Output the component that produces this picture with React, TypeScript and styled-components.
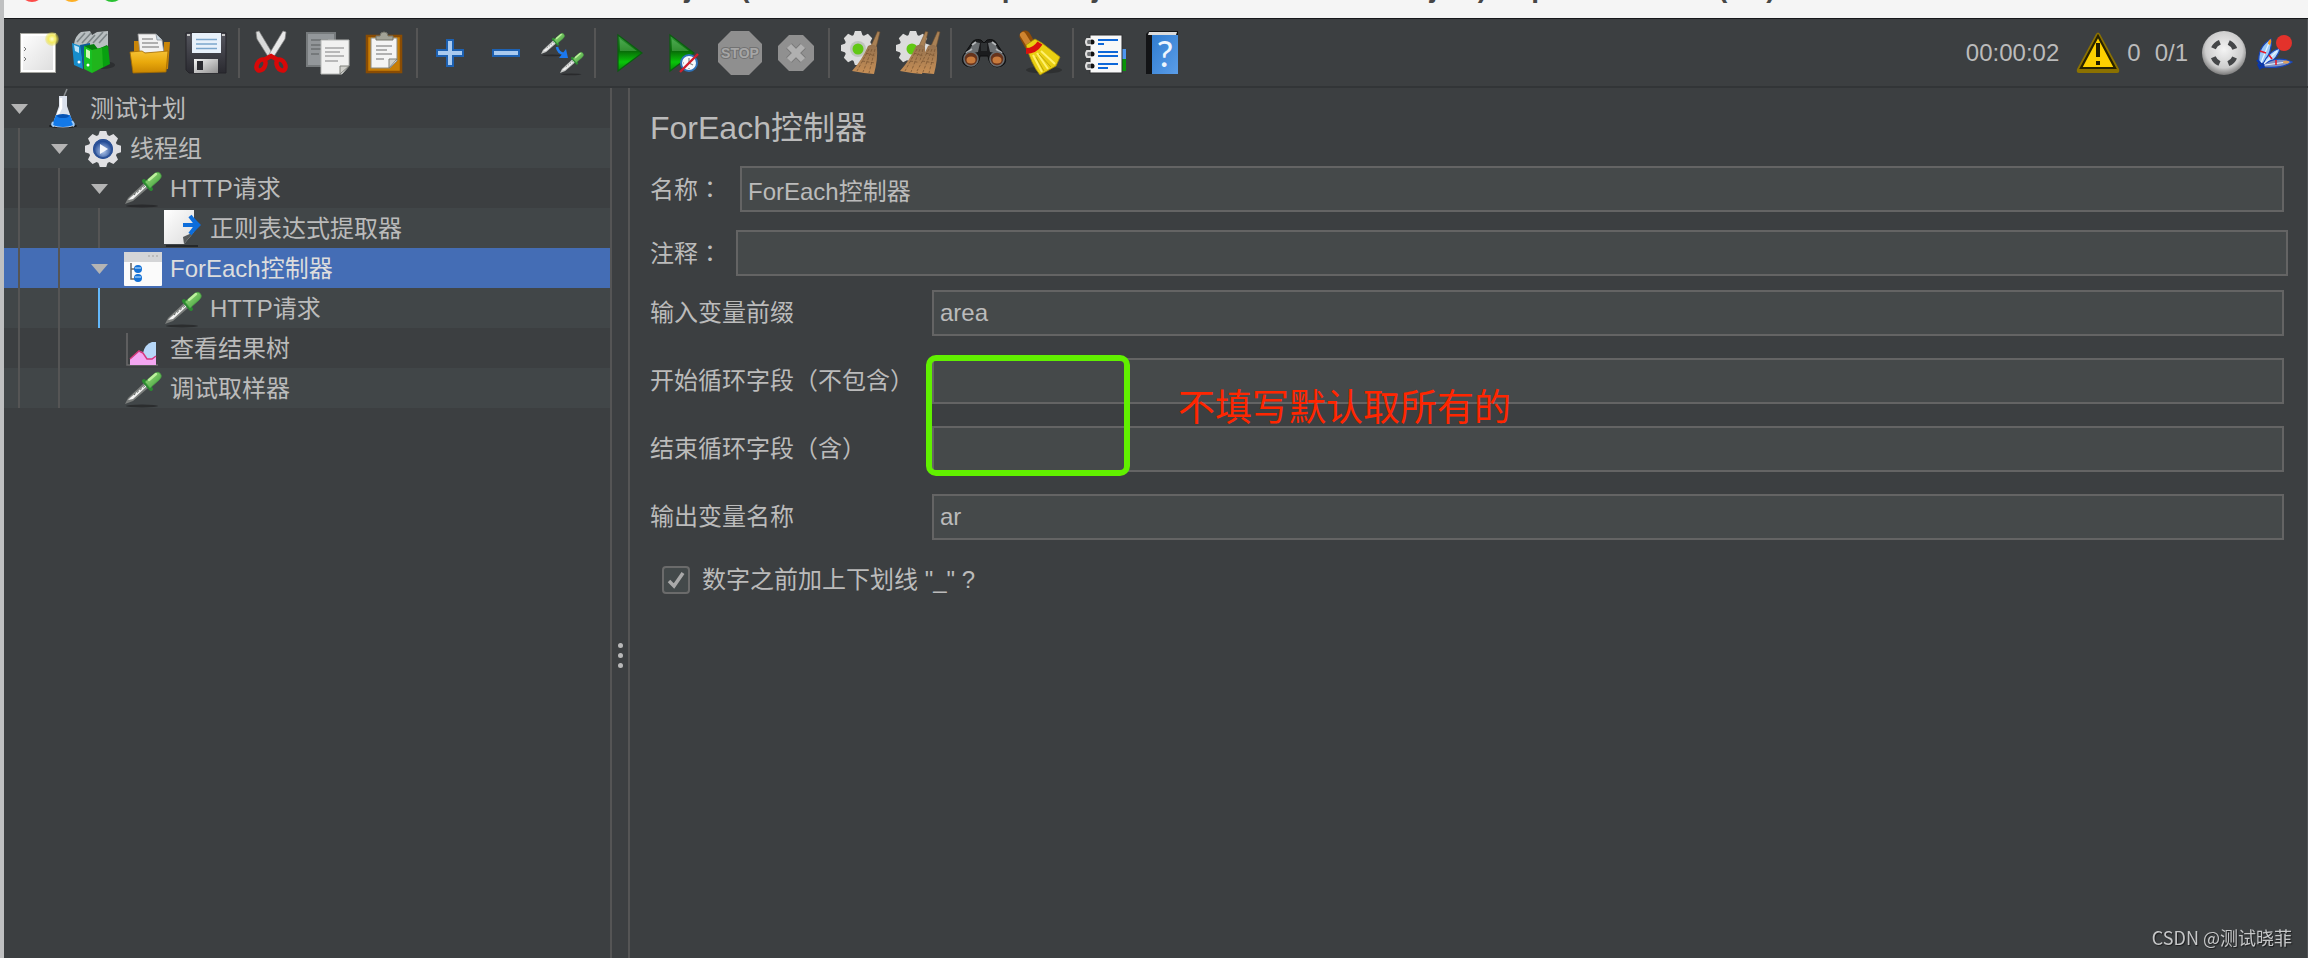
import React, { useState } from "react";
import styled, { createGlobalStyle } from "styled-components";

const color = {
  panel: "#3c3f41",
  stripe: "#414648",
  field: "#45494a",
  line: "#646464",
  divider: "#555555",
  text: "#bbbbbb",
  selected: "#446db5",
};

const GlobalStyle = createGlobalStyle`
  * { box-sizing: border-box; }
  body {
    margin: 0;
    background: ${color.panel};
    color: ${color.text};
    font-family: "Liberation Sans", "Noto Sans CJK SC", sans-serif;
    font-size: 24px;
    line-height: 40px;
  }
  button, input { font: inherit; color: inherit; }
  svg { display: block; overflow: visible; }
`;

/* ---------- window ---------- */

const Window = styled.div`
  display: flex;
  flex-direction: column;
  min-height: 100vh;
  border-left: 4px solid #bfc0c1;
  box-shadow: inset -1px 0 #505356;
`;

const TitleBar = styled.header`
  display: flex;
  align-items: flex-end;
  height: 19px;
  overflow: hidden;
  background: #f5f5f5;
  border-bottom: 1px solid #17181b;
`;

const TitleBarInner = styled.div`
  display: grid;
  grid-template-columns: 160px 1fr 160px;
  align-items: center;
  flex: 1;
  height: 56px;
`;

const Lights = styled.div`
  display: flex;
  gap: 16px;
  padding-left: 16px;
`;

const Light = styled.button<{ $fill: string }>`
  width: 24px;
  height: 24px;
  padding: 0;
  border: 0;
  border-radius: 50%;
  background: ${(p) => p.$fill};
`;

const WindowTitle = styled.h1`
  margin: 0;
  padding-bottom: 4px;
  color: #464646;
  font-size: 28px;
  line-height: 32px;
  text-align: center;
  white-space: nowrap;
`;

/* ---------- tool bar ---------- */

const Toolbar = styled.nav`
  display: flex;
  align-items: center;
  padding: 9px 16px 8px 6px;
  border-bottom: 2px solid #323537;
`;

const ToolButton = styled.button`
  flex: none;
  display: flex;
  align-items: center;
  justify-content: center;
  width: 56px;
  height: 50px;
  padding: 0;
  border: 0;
  background: transparent;
`;

const Separator = styled.span`
  flex: none;
  width: 2px;
  height: 50px;
  margin: 0 4px;
  background: ${color.divider};
`;

const Status = styled.div`
  display: flex;
  align-items: center;
  margin-left: auto;
  white-space: nowrap;
`;

const Elapsed = styled.time`
  margin-right: 10px;
`;

const Count = styled.span`
  margin-right: 14px;
`;

const WarningButton = styled(ToolButton)`
  width: 58px;
`;

const GaugeIcon = styled.span`
  display: flex;
  gap: 10px;
`;

/* ---------- tree ---------- */

const Main = styled.main`
  flex: 1;
  display: grid;
  grid-template-columns: 608px 18px minmax(0, 1fr);
`;

const Tree = styled.ul`
  margin: 0;
  padding: 0;
  list-style: none;
  border-right: 2px solid ${color.divider};
`;

const TreeRow = styled.li<{ $selected?: boolean }>`
  display: flex;
  height: 40px;
  line-height: 42px;
  white-space: nowrap;
  background: ${color.panel};
  &:nth-child(even) { background: ${color.stripe}; }
  && {
    ${(p) => p.$selected && `background: ${color.selected}; color: #dddddd;`}
  }
`;

const Guide = styled.span<{ $active?: boolean }>`
  width: 26px;
  margin-left: 14px;
  border-left: 2px solid ${(p) => (p.$active ? "#63b8fb" : color.divider)};
`;

const Toggle = styled.button`
  display: flex;
  align-items: center;
  width: 40px;
  padding: 2px 0 0 7px;
  border: 0;
  background: transparent;
`;

const NoToggle = styled.span`
  width: 40px;
`;

const NodeIcon = styled.span`
  width: 40px;
  margin-right: 6px;
`;

const Splitter = styled.div`
  display: flex;
  flex-direction: column;
  align-items: center;
  gap: 5px;
  padding-top: 555px;
  border-right: 2px solid ${color.divider};
`;

const Dot = styled.span`
  width: 5px;
  height: 5px;
  border-radius: 50%;
  background: #b8b8b8;
`;

/* ---------- form ---------- */

const Panel = styled.section`
  display: flex;
  flex-direction: column;
  padding: 16px 20px 0;
`;

const Heading = styled.h2`
  margin: 0 0 14px;
  font-size: 32px;
  font-weight: 400;
  line-height: 48px;
`;

const FieldRow = styled.div<{ $label: number; $gap: number; $wide?: boolean }>`
  display: grid;
  grid-template-columns: ${(p) => p.$label}px minmax(0, 1fr);
  align-items: center;
  margin-bottom: ${(p) => p.$gap}px;
  padding-right: ${(p) => (p.$wide ? 0 : 4)}px;
  line-height: 42px;
  white-space: nowrap;
`;

const CenteredMark = styled.span`
  font-family: "Noto Sans CJK TC", sans-serif;
`;

const Input = styled.input`
  width: 100%;
  height: 46px;
  padding: 0 6px;
  border: 2px solid ${color.line};
  border-radius: 0;
  outline: 0;
  background: ${color.field};
  line-height: 28px;
`;

const Range = styled.div`
  position: relative;
`;

const Highlight = styled.div`
  position: absolute;
  left: 276px;
  top: -3px;
  width: 204px;
  height: 121px;
  border: 6px solid #61f000;
  border-radius: 10px;
  pointer-events: none;
`;

const Remark = styled.p`
  position: absolute;
  left: 528px;
  top: 24px;
  margin: 0;
  color: #ff2600;
  font-size: 37px;
  line-height: 54px;
  white-space: nowrap;
`;

const CheckRow = styled.label`
  display: flex;
  align-items: center;
  gap: 12px;
  margin-top: -2px;
  padding-left: 12px;
`;

const Check = styled.input`
  appearance: none;
  width: 28px;
  height: 28px;
  margin: 0;
  border: 2px solid #6b6b6b;
  border-radius: 4px;
  background: #43494a;
`;

const CheckBox = styled.span`
  display: grid;
  > * { grid-area: 1 / 1; }
  svg { pointer-events: none; }
`;

const Watermark = styled.footer`
  position: fixed;
  right: 16px;
  bottom: 7px;
  color: #c6c7c8;
  font-family: "Noto Sans CJK SC", sans-serif;
  font-size: 18px;
  line-height: 28px;
  text-shadow: 1px 1px 1px #1c1d1e;
`;

/* ---------- icons ---------- */

const Icon = ({ size = 44, children }: { size?: number; children: React.ReactNode }) => (
  <svg width={size} height={size} viewBox={`0 0 ${size} ${size}`} aria-hidden="true">
    {children}
  </svg>
);

const GradientSheet = styled.svg`
  position: absolute;
`;

const Gradients = () => (
  <GradientSheet width="0" height="0" aria-hidden="true">
    <defs>
      <linearGradient id="paper" x1="0" y1="0" x2="1" y2="1">
        <stop offset="0" stopColor="#fff" />
        <stop offset="1" stopColor="#dcdcdc" />
      </linearGradient>
      <linearGradient id="folder" x1="0" y1="0" x2="0" y2="1">
        <stop offset="0" stopColor="#f6c235" />
        <stop offset="0.5" stopColor="#e9a90c" />
        <stop offset="1" stopColor="#c98500" />
      </linearGradient>
      <linearGradient id="green" x1="0" y1="0" x2="0" y2="1">
        <stop offset="0" stopColor="#3ca043" />
        <stop offset="0.45" stopColor="#086c08" />
        <stop offset="0.75" stopColor="#09c409" />
        <stop offset="1" stopColor="#078607" />
      </linearGradient>
      <linearGradient id="metal" x1="0" y1="0" x2="1" y2="1">
        <stop offset="0" stopColor="#f4f4f4" />
        <stop offset="1" stopColor="#8f8f8f" />
      </linearGradient>
      <linearGradient id="floppy" x1="0" y1="0" x2="0" y2="1">
        <stop offset="0" stopColor="#55565e" />
        <stop offset="1" stopColor="#2a2a30" />
      </linearGradient>
      <linearGradient id="bulb" x1="0" y1="0" x2="1" y2="1">
        <stop offset="0" stopColor="#a4e383" />
        <stop offset="1" stopColor="#3b9c38" />
      </linearGradient>
      <linearGradient id="book" x1="0" y1="0" x2="1" y2="1">
        <stop offset="0" stopColor="#2f7cd0" />
        <stop offset="1" stopColor="#5b9de8" />
      </linearGradient>
      <linearGradient id="straw" x1="0" y1="0" x2="0" y2="1">
        <stop offset="0" stopColor="#94714e" />
        <stop offset="1" stopColor="#c78f56" />
      </linearGradient>
      <radialGradient id="ball" cx="0.5" cy="0.42" r="0.6">
        <stop offset="0" stopColor="#f4f4f4" />
        <stop offset="0.7" stopColor="#cdcdcd" />
        <stop offset="1" stopColor="#6e6e6e" />
      </radialGradient>
      <radialGradient id="glow">
        <stop offset="0" stopColor="#ffffd0" />
        <stop offset="0.5" stopColor="#f4ec62" />
        <stop offset="1" stopColor="#e6dc3a" stopOpacity="0.25" />
      </radialGradient>
      <radialGradient id="hub" cx="0.5" cy="0.6">
        <stop offset="0" stopColor="#b8cdf0" />
        <stop offset="1" stopColor="#1c4591" />
      </radialGradient>
    </defs>
  </GradientSheet>
);

/* A dropper lying from its tip at 0,0 to its bulb at about 34,-31. */
const Dropper = ({ x, y, scale = 1, tube = "#7b7e7c" }: { x: number; y: number; scale?: number; tube?: string }) => (
  <g transform={`translate(${x} ${y}) scale(${scale})`}>
    <ellipse cx="17" cy="2" rx="16" ry="1.4" fill="#1c1d1e" opacity="0.6" />
    <path d="M0 0L3-6L19-21L23-16L8-3Z" fill={tube} />
    <path d="M3-4L6-7L20-19L21.500-17.500L8-5Z" fill="#f4f4f4" />
    <path d="M9-9L20-18" stroke="#5d6660" strokeWidth="1" strokeDasharray="2 2" />
    <path d="M19-23L26-15" stroke="#2b8a31" strokeWidth="4" strokeLinecap="round" />
    <path d="M20-22L29-30Q34-34 36-29Q37-27 34-24L25-16Z" fill="url(#bulb)" stroke="#4aa445" strokeWidth="0.8" />
    <path d="M24-24L31-30" stroke="#bdf09d" strokeWidth="2.4" strokeLinecap="round" />
  </g>
);

const gearTeeth = [0, 45, 90, 135, 180, 225, 270, 315];

const Gear = ({ x, y, r, fill }: { x: number; y: number; r: number; fill: string }) => (
  <g transform={`translate(${x} ${y})`} fill={fill}>
    <circle r={r * 0.8} />
    {gearTeeth.map((a) => (
      <path key={a} transform={`rotate(${a})`} d={`M${-r * 0.28} ${-r * 0.7}L${-r * 0.18} ${-r}H${r * 0.18}L${r * 0.28} ${-r * 0.7}Z`} />
    ))}
  </g>
);

const Broom = ({ x }: { x: number }) => (
  <g transform={`translate(${x} 0)`}>
    <path d="M37.500.5L40 1L36 17L31 15Z" fill="#a98155" stroke="#6d4f31" strokeWidth="0.6" />
    <path d="M28 15Q33 12 37 16Q38 28 34 43L24 42L12 40Q22 29 28 15Z" fill="url(#straw)" />
    <path d="M29 18L17 40M32 18L23 41M35 18L29 42M26 22L35 25M22 30L35 32" stroke="#7c5835" strokeWidth="0.8" strokeDasharray="3 1.5" />
  </g>
);

const ToolIcon = ({ name }: { name: string }) => {
  switch (name) {
    case "new":
      return (
        <Icon>
          <rect x="4.500" y="2.500" width="35" height="39" fill="url(#paper)" stroke="#a5a5a0" />
          <rect x="6" y="4" width="32" height="36" fill="none" stroke="#fff" strokeWidth="2" />
          <path d="M8 16l2 2-2 2M8 26l2 2-2 2" stroke="#777" fill="none" />
          <circle cx="36" cy="8" r="7" fill="url(#glow)" />
        </Icon>
      );
    case "templates":
      return (
        <Icon>
          <ellipse cx="30" cy="34" rx="13" ry="4" fill="#232526" opacity="0.6" />
          <path d="M2 13Q3 5 9 1L18 0L20 4L25 1L36 0V16L24 20L6 18Z" fill="#b9bfc1" />
          <path d="M5 11l8-9M10 12l9-10M15 13l8-9M21 12l10-11M27 12l8-9" stroke="#7d8587" strokeWidth="1.6" />
          <path d="M0 12L9 15L11 38L2 34Z" fill="#168dcc" />
          <path d="M2 14L7 16L7 22L3 20Z" fill="#b9e2f8" />
          <path d="M8 14L18 12L18 16L12 18V38Z" fill="#0a5c98" />
          <path d="M12 15L22 13L26 18L35 14L37 17L20 20Z" fill="#067f0d" />
          <path d="M12 15L20 19V42L12 38Z" fill="#17c022" />
          <path d="M14 18L18 20V28L14 26Z" fill="#cdf8b8" />
          <path d="M20 19L36 15L38 33L20 42Z" fill="#08a010" />
          <path d="M20 19L30 17L31 36L20 42Z" fill="#20b51c" />
          <circle cx="7" cy="31" r="1.500" fill="#fff" />
          <circle cx="16" cy="34" r="1.500" fill="#fff" />
        </Icon>
      );
    case "open":
      return (
        <Icon>
          <path d="M6 10H14V20H36V11H42L40 38L6 40Z" fill="#c98508" />
          <path d="M10 3H28L34 9L36 22H12Z" fill="#f1f1f1" stroke="#9c9c9c" strokeWidth="0.8" />
          <path d="M28 3L29 9H34" fill="#c7d5df" stroke="#8a9299" strokeWidth="0.8" />
          <path d="M14 8H25M14 12H30M14 16H31" stroke="#999" strokeWidth="1.5" />
          <path d="M2 21L14 20L17 22L40 20L38 41L5 42Z" fill="url(#folder)" stroke="#a56c00" strokeWidth="0.8" />
        </Icon>
      );
    case "save":
      return (
        <Icon>
          <path d="M2 2H42V42H5L2 39Z" fill="url(#floppy)" stroke="#25252a" />
          <rect x="8" y="2" width="29" height="20" fill="#e8f1fa" />
          <path d="M12 8.500H33M12 13H33M12 17.500H33" stroke="#7ba6cc" strokeWidth="1.400" />
          <rect x="10" y="28" width="24" height="14" fill="url(#metal)" />
          <rect x="13" y="30" width="6" height="9" fill="#2b2b30" />
          <path d="M3 4h3M38 4h3" stroke="#c6c6c6" strokeWidth="2" />
        </Icon>
      );
    case "cut":
      return (
        <Icon>
          <path d="M6 1L9 0L24 25L19 27L7 8Z" fill="#d9dada" stroke="#858585" strokeWidth="0.7" />
          <path d="M36 1L33 0L18 25L23 27L35 8Z" fill="#e8e8e8" stroke="#858585" strokeWidth="0.7" />
          <g fill="none" stroke="#d80808" strokeWidth="4.500">
            <ellipse cx="11" cy="34" rx="4" ry="6" transform="rotate(30 11 34)" />
            <ellipse cx="31" cy="34" rx="4" ry="6" transform="rotate(-30 31 34)" />
            <path d="M14 29L21 25L28 29" />
          </g>
        </Icon>
      );
    case "copy":
      return (
        <Icon>
          <rect x="1" y="2" width="28" height="33" fill="#93979a" stroke="#767a7c" strokeWidth="2" />
          <path d="M5 9H22M5 14H15M5 18H15M5 23H13" stroke="#6c7072" strokeWidth="1.500" />
          <path d="M15 9H43V35L36 43H15Z" fill="#f1f1f0" stroke="#b5b7b5" />
          <path d="M19 17H38M19 21H34M19 25H38M19 30H32" stroke="#a5a5a5" strokeWidth="1.500" />
          <path d="M43 35H34V43Z" fill="#cfcfca" stroke="#7e807a" />
        </Icon>
      );
    case "paste":
      return (
        <Icon>
          <rect x="5" y="5" width="34" height="36" fill="#c77d06" stroke="#8a4c03" strokeWidth="2.500" />
          <path d="M9 7H35V30L28 37H9Z" fill="#f4f4f4" stroke="#8c8c84" />
          <path d="M35 28H27V37Z" fill="#d0d0ca" stroke="#7e807a" />
          <path d="M14 15H30M14 19H25M14 23H30M14 28H22" stroke="#9b9b9b" strokeWidth="1.500" />
          <path d="M14 9V5H18Q18 1 22 1Q26 1 26 5H31V9Z" fill="#a3a397" stroke="#74746a" />
        </Icon>
      );
    case "plus":
      return (
        <Icon>
          <path d="M18 8H26V18H36V26H26V36H18V26H8V18H18Z" fill="#1d61b2" />
          <path d="M20 10H24V20H34V24H24V34H20V24H10V20H20Z" fill="#a9caef" />
        </Icon>
      );
    case "minus":
      return (
        <Icon>
          <rect x="8" y="18" width="28" height="8" fill="#1d61b2" />
          <rect x="10" y="20" width="24" height="4" fill="#a9caef" />
        </Icon>
      );
    case "toggle":
      return (
        <Icon>
          <Dropper x={1} y={23} scale={0.65} tube="#c4c6c5" />
          <Dropper x={20} y={42} scale={0.65} tube="#c4c6c5" />
          <path d="M17 16Q18 22 24 23" stroke="#1f7df0" strokeWidth="2.500" fill="none" />
          <path d="M26 18L28 27L19 27Z" fill="#1b78ef" />
        </Icon>
      );
    case "start":
      return (
        <Icon>
          <path d="M12 4L36 22L12 40Z" fill="url(#green)" stroke="#0a5d10" strokeWidth="1.200" />
          <path d="M14 8L31 20L14 20Z" fill="#7dd07f" opacity="0.35" />
        </Icon>
      );
    case "startNoTimers":
      return (
        <Icon>
          <path d="M8 4L32 22L8 40Z" fill="url(#green)" stroke="#0a5d10" strokeWidth="1.200" />
          <path d="M10 8L27 20L10 20Z" fill="#7dd07f" opacity="0.35" />
          <circle cx="27" cy="32" r="8" fill="#f7fafc" stroke="#2e72b8" strokeWidth="2" />
          <path d="M27 32V27M27 32L31 34M27 38v-1M21 32h1" stroke="#888" strokeWidth="1.200" />
          <path d="M18 41L36 23" stroke="#cf1f2d" strokeWidth="2.400" />
        </Icon>
      );
    case "stop":
      return (
        <Icon>
          <path d="M13 0H31L44 13V31L31 44H13L0 31V13Z" fill="#8f8f8f" />
          <text x="22" y="27" textAnchor="middle" fontSize="14" fontWeight="700" fill="#a6a6a6" stroke="#727272" strokeWidth="2" paintOrder="stroke">STOP</text>
        </Icon>
      );
    case "shutdown":
      return (
        <Icon>
          <path d="M15 4H29L40 15V29L29 40H15L4 29V15Z" fill="#909090" />
          <path d="M15 15L29 29M29 15L15 29" stroke="#7b7b7b" strokeWidth="8" />
          <path d="M15 15L29 29M29 15L15 29" stroke="#b0b0b0" strokeWidth="6" />
        </Icon>
      );
    case "clear":
      return (
        <Icon>
          <Gear x={18} y={17} r={17} fill="#dcdcdc" />
          <circle cx="18" cy="18" r="8" fill="#bfc4bd" />
          <circle cx="18" cy="18" r="5.500" fill="#62c814" />
          <Broom x={0} />
        </Icon>
      );
    case "clearAll":
      return (
        <Icon>
          <Gear x={17} y={17} r={17} fill="#dcdcdc" />
          <circle cx="16" cy="18" r="5.500" fill="#62c814" />
          <Broom x={-8} />
          <Broom x={4} />
        </Icon>
      );
    case "search":
      return (
        <Icon>
          <path d="M9 13Q12 7 19 9L22 12L25 9Q32 7 35 13L43 25Q46 35 35 36Q27 35 26 25H18Q17 35 9 36Q-2 35 1 25Z" fill="#1b1c1e" stroke="#0e0f10" />
          <path d="M9 16L13 11L18 12L16 21L6 23ZM35 16L31 11L26 12L28 21L38 23Z" fill="#6a6e71" />
          <path d="M19 12H25V20H19Z" fill="#2f3234" />
          <path d="M10 14l4-3M30 11l4 3M4 22l6-4M34 18l6 4" stroke="#b4b7b9" strokeWidth="1.800" />
          <circle cx="9" cy="28" r="7" fill="#66331c" stroke="#6a6d70" strokeWidth="1.500" />
          <circle cx="35" cy="28" r="7" fill="#66331c" stroke="#6a6d70" strokeWidth="1.500" />
          <ellipse cx="9" cy="29" rx="4.500" ry="3.500" fill="#c87a3c" />
          <ellipse cx="35" cy="29" rx="4.500" ry="3.500" fill="#c87a3c" />
        </Icon>
      );
    case "resetSearch":
      return (
        <Icon>
          <ellipse cx="26" cy="39" rx="18" ry="3.500" fill="#242627" opacity="0.6" />
          <path d="M7 5L12 14" stroke="#8b4b09" strokeWidth="11" strokeLinecap="round" />
          <path d="M5 4L10 12" stroke="#cf842f" strokeWidth="6" strokeLinecap="round" />
          <path d="M8 14L17 8L24 12L42 26L38 35L22 44Q13 33 8 14Z" fill="#e9cf12" stroke="#a58c05" strokeWidth="0.800" />
          <path d="M15 24L24 41M19 22L30 38M23 20L37 33" stroke="#fff06c" strokeWidth="2" />
          <path d="M18 26L26 40M21 23L33 36" stroke="#b39b08" strokeWidth="0.800" />
          <path d="M8 20Q17 20 22 12" stroke="#d9120d" strokeWidth="6" fill="none" />
        </Icon>
      );
    case "functions":
      return (
        <Icon>
          <path d="M37 18h5v10h-5z" fill="#4d97ef" />
          <path d="M37 28h5v12h-5z" fill="#079407" />
          <rect x="6" y="4" width="32" height="38" fill="#f8f8f8" stroke="#2f3132" />
          <g stroke="#0d67d8" strokeWidth="2.200">
            <path d="M14 9H34M14 13H20M14 21H34M14 25H34M14 33H34M14 37H24" />
          </g>
          {[11, 23, 35].map((y) => (
            <g key={y}>
              <circle cx="8" cy={y} r="2.500" fill="#111" />
              <path d={`M7 ${y - 3}H3Q1 ${y} 3 ${y + 3}H7`} fill="#6f7274" stroke="#dedede" strokeWidth="2" />
            </g>
          ))}
        </Icon>
      );
    case "help":
      return (
        <Icon>
          <path d="M6 3L9 0H38V43H6Z" fill="#131416" />
          <path d="M9 1H37L36 4H8Z" fill="#dcdcdc" />
          <rect x="12" y="4" width="26" height="39" fill="url(#book)" />
          <text x="25" y="36" textAnchor="middle" fontFamily="Lato, sans-serif" fontSize="37" fill="#eef5fd">?</text>
        </Icon>
      );
    case "warning":
      return (
        <Icon>
          <path d="M20 3Q22 0 24 3L43 38Q44 42 41 42H3Q0 42 1 38Z" fill="#8b7100" />
          <path d="M22 5L39 37H5Z" fill="#fdd000" stroke="#272200" strokeWidth="2.200" />
          <path d="M20 12H24V26H20ZM20 30H24V34H20Z" fill="#221e00" />
        </Icon>
      );
    default:
      return null;
  }
};

const BallIcon = () => (
  <Icon>
    <circle cx="22" cy="22" r="22" fill="url(#ball)" />
    <circle cx="22" cy="22" r="11.500" fill="none" stroke="#444648" strokeWidth="5" strokeDasharray="9 9.060" strokeDashoffset="-4.530" />
  </Icon>
);

const FeatherIcon = () => (
  <svg width="36" height="44" viewBox="0 0 36 44" aria-hidden="true">
    <g stroke="#1745b8" strokeWidth="1.200">
      <path d="M3 33Q1 16 15 8Q17 20 7 34Z" fill="#9ac8f7" />
      <path d="M7 33Q12 21 24 17Q23 26 10 35Z" fill="#b4d7fa" />
      <path d="M7 34Q20 24 36 31Q26 38 7 36Z" fill="#8193c4" />
      <path d="M5 32L13 12M8 33L21 20M9 34L31 31" fill="none" stroke="#e9f4ff" />
    </g>
    <path d="M12 13Q12 9 15 8Q16 11 14 14Z" fill="#f79a1c" />
    <ellipse cx="30" cy="31" rx="3" ry="1.500" fill="#dda05c" />
    <path d="M4 20L10 22M13 24L16 28M20 29L20 34" stroke="#e4192b" strokeWidth="1.600" />
    <path d="M1 29L7 35L4 37L2 33M6 32L8 37" fill="none" stroke="#0b37a7" strokeWidth="2.400" />
    <circle cx="28" cy="12" r="8" fill="#e3322b" />
  </svg>
);

const TreeIcon = ({ name }: { name: string }) => {
  switch (name) {
    case "plan":
      return (
        <Icon size={40}>
          <ellipse cx="19" cy="38" rx="14" ry="2" fill="#18191a" />
          <path d="M20 8L23 1" stroke="#8b8f92" strokeWidth="1.500" />
          <path d="M15 8H23V18L30 38Q19 41 8 38L15 18Z" fill="#dbe1ec" />
          <path d="M17 10V20L14 26" stroke="#fff" strokeWidth="2.500" fill="none" />
          <path d="M12 27H26L30 37Q19 41 8 37Z" fill="#1379e8" />
          <path d="M9 34Q7 38 10 38M28 33Q31 37 29 38" stroke="#9dcbfa" strokeWidth="2" fill="none" />
          <ellipse cx="19" cy="28" rx="6" ry="2" fill="#0652b4" />
        </Icon>
      );
    case "threads":
      return (
        <Icon size={40}>
          <Gear x={19} y={21} r={18} fill="#e0e0e3" />
          <circle cx="19" cy="21" r="10" fill="url(#hub)" />
          <circle cx="19" cy="21" r="9" fill="none" stroke="#2c5297" strokeWidth="2" />
          <path d="M16 16L24 21L16 26Z" fill="#f4f6fa" />
        </Icon>
      );
    case "sampler":
      return (
        <Icon size={40}>
          <Dropper x={1} y={36} />
        </Icon>
      );
    case "extractor":
      return (
        <Icon size={40}>
          <path d="M2 38H34" stroke="#25282a" strokeWidth="2" />
          <path d="M0 2H30V24L20 36H0Z" fill="url(#paper)" />
          <path d="M30 24L20 36L19 29Z" fill="#55595b" />
          <path d="M19 17H31M26 8L33 17L26 26" stroke="#0c6ddb" strokeWidth="4" fill="none" />
          <path d="M30 10L37 17L30 24Z" fill="#0c6ddb" />
        </Icon>
      );
    case "controller":
      return (
        <Icon size={40}>
          <rect x="0" y="4" width="38" height="34" rx="1" fill="#fbfbfb" />
          <rect x="0" y="4" width="38" height="10" fill="#d4d5d7" />
          <path d="M24 8h2M28 8h2M32 8h2" stroke="#bbb" strokeWidth="2" />
          <path d="M7 15V31H11M7 21H11" stroke="#666" strokeWidth="1.500" fill="none" />
          <circle cx="14" cy="21" r="4" fill="#1672d6" />
          <circle cx="14" cy="30" r="4" fill="#1672d6" />
          <path d="M11 20h6M11 29h6" stroke="#8fc3f6" strokeWidth="1.500" />
        </Icon>
      );
    case "results":
      return (
        <Icon size={40}>
          <path d="M3 5V37H34" stroke="#6a6a6a" strokeWidth="1.500" fill="none" />
          <path d="M19 25Q21 16 28 14H32V33H22Z" fill="#b7d7f8" />
          <path d="M6 37V31L15 23L19 24L23 31L32 29V37Z" fill="#f3a6f1" />
          <path d="M6 31L15 23L19 25L23 31L28 31L32 28" stroke="#d4387d" strokeWidth="1.500" fill="none" />
        </Icon>
      );
    default:
      return null;
  }
};

/* ---------- data ---------- */

const toolGroups: { icon: string; label: string; disabled?: boolean }[][] = [
  [
    { icon: "new", label: "新建" },
    { icon: "templates", label: "模板" },
    { icon: "open", label: "打开" },
    { icon: "save", label: "保存" },
  ],
  [
    { icon: "cut", label: "剪切" },
    { icon: "copy", label: "复制" },
    { icon: "paste", label: "粘贴" },
  ],
  [
    { icon: "plus", label: "展开" },
    { icon: "minus", label: "收起" },
    { icon: "toggle", label: "切换" },
  ],
  [
    { icon: "start", label: "启动" },
    { icon: "startNoTimers", label: "不停顿开始" },
    { icon: "stop", label: "停止", disabled: true },
    { icon: "shutdown", label: "关闭", disabled: true },
  ],
  [
    { icon: "clear", label: "清除" },
    { icon: "clearAll", label: "清除全部" },
  ],
  [
    { icon: "search", label: "查找" },
    { icon: "resetSearch", label: "重置搜索" },
  ],
  [
    { icon: "functions", label: "函数助手" },
    { icon: "help", label: "帮助" },
  ],
];

const nodes: { text: string; icon: string; level: number; open?: boolean; active?: boolean; selected?: boolean }[] = [
  { text: "测试计划", icon: "plan", level: 0, open: true },
  { text: "线程组", icon: "threads", level: 1, open: true },
  { text: "HTTP请求", icon: "sampler", level: 2, open: true },
  { text: "正则表达式提取器", icon: "extractor", level: 3 },
  { text: "ForEach控制器", icon: "controller", level: 2, open: true, selected: true },
  { text: "HTTP请求", icon: "sampler", level: 3, active: true },
  { text: "查看结果树", icon: "results", level: 2 },
  { text: "调试取样器", icon: "sampler", level: 2 },
];

export default function App() {
  const [underscore, setUnderscore] = useState(true);
  return (
    <Window>
      <GlobalStyle />
      <Gradients />
      <TitleBar>
        <TitleBarInner>
          <Lights>
            <Light $fill="#fc4b48" aria-label="关闭窗口" />
            <Light $fill="#fdaf24" aria-label="最小化" />
            <Light $fill="#28c131" aria-label="缩放" />
          </Lights>
          <WindowTitle>循环控制器.jmx (/Users/xiaofei001/apache-jmeter-5.4/bin/循环控制器.jmx) - Apache JMeter (5.4)</WindowTitle>
        </TitleBarInner>
      </TitleBar>

      <Toolbar>
        {toolGroups.map((group, i) => (
          <React.Fragment key={i}>
            {i > 0 && <Separator />}
            {group.map((tool) => (
              <ToolButton key={tool.icon} aria-label={tool.label} disabled={tool.disabled}>
                <ToolIcon name={tool.icon} />
              </ToolButton>
            ))}
          </React.Fragment>
        ))}
        <Status>
          <Elapsed>00:00:02</Elapsed>
          <WarningButton aria-label="日志">
            <ToolIcon name="warning" />
          </WarningButton>
          <Count>0</Count>
          <Count>0/1</Count>
          <GaugeIcon>
            <BallIcon />
            <FeatherIcon />
          </GaugeIcon>
        </Status>
      </Toolbar>

      <Main>
        <Tree>
          {nodes.map((node, i) => (
            <TreeRow key={i} $selected={node.selected}>
              {Array.from({ length: node.level }, (_, g) => (
                <Guide key={g} $active={node.active && g === node.level - 1} />
              ))}
              {node.open ? (
                <Toggle aria-label="收起节点">
                  <svg width="17" height="10" viewBox="0 0 17 10" aria-hidden="true">
                    <path d="M0 0H17L8.500 10Z" fill="#b4b4b4" />
                  </svg>
                </Toggle>
              ) : (
                <NoToggle />
              )}
              <NodeIcon>
                <TreeIcon name={node.icon} />
              </NodeIcon>
              {node.text}
            </TreeRow>
          ))}
        </Tree>

        <Splitter>
          <Dot />
          <Dot />
          <Dot />
        </Splitter>

        <Panel>
          <Heading>ForEach控制器</Heading>
          <FieldRow $label={90} $gap={18}>
            <label htmlFor="name">名称<CenteredMark>：</CenteredMark></label>
            <Input id="name" defaultValue="ForEach控制器" />
          </FieldRow>
          <FieldRow $label={86} $gap={14} $wide>
            <label htmlFor="comment">注释<CenteredMark>：</CenteredMark></label>
            <Input id="comment" />
          </FieldRow>
          <FieldRow $label={282} $gap={22}>
            <label htmlFor="prefix">输入变量前缀</label>
            <Input id="prefix" defaultValue="area" />
          </FieldRow>
          <Range>
            <FieldRow $label={282} $gap={22}>
              <label htmlFor="start">开始循环字段（不包含）</label>
              <Input id="start" />
            </FieldRow>
            <FieldRow $label={282} $gap={22}>
              <label htmlFor="end">结束循环字段（含）</label>
              <Input id="end" />
            </FieldRow>
            <Highlight />
            <Remark>不填写默认取所有的</Remark>
          </Range>
          <FieldRow $label={282} $gap={22}>
            <label htmlFor="output">输出变量名称</label>
            <Input id="output" defaultValue="ar" />
          </FieldRow>
          <CheckRow>
            <CheckBox>
              <Check type="checkbox" checked={underscore} onChange={(e) => setUnderscore(e.target.checked)} />
              {underscore && (
                <svg width="28" height="28" viewBox="0 0 28 28" aria-hidden="true">
                  <path d="M7 15L12 20L21 7" fill="none" stroke="#a9a9a9" strokeWidth="3.500" />
                </svg>
              )}
            </CheckBox>
            数字之前加上下划线 "_" ?
          </CheckRow>
        </Panel>
      </Main>
      <Watermark>CSDN @测试晓菲</Watermark>
    </Window>
  );
}
